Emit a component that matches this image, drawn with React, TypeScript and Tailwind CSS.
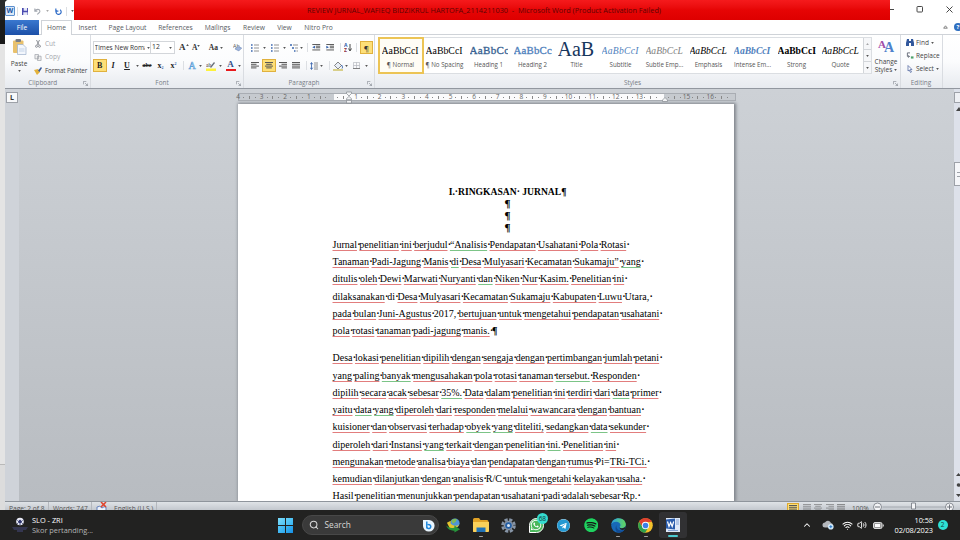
import React from 'react';
import { FaWhatsapp, FaTelegram, FaSpotify } from 'react-icons/fa';
import { Search, Wifi, Volume2, ChevronUp } from 'lucide-react';

type Line = { width: number; text: string };

// "~" marks a grammar (green) underline, "*" a word without any underline.
const FIRST_PARAGRAPH: Line[] = [
  { width: 296, text: 'Jurnal penelitian ini berjudul ~“Analisis Pendapatan Usahatani Pola Rotasi' },
  { width: 310.5, text: 'Tanaman Padi-Jagung Manis ~di Desa Mulyasari Kecamatan Sukamaju” ~yang' },
  { width: 294, text: 'ditulis oleh Dewi Marwati Nuryanti ~dan Niken Nur Kasim. Penelitian ini' },
  { width: 319, text: 'dilaksanakan *di Desa Mulyasari Kecamatan Sukamaju Kabupaten Luwu *Utara,' },
  { width: 329, text: 'pada bulan Juni-Agustus *2017, bertujuan untuk mengetahui pendapatan usahatani' },
  { width: 159.5, text: 'pola rotasi tanaman padi-jagung manis.' },
];

const SECOND_PARAGRAPH: Line[] = [
  { width: 329, text: 'Desa lokasi penelitian dipilih dengan sengaja dengan pertimbangan jumlah petani' },
  { width: 306.5, text: 'yang paling ~banyak mengusahakan pola rotasi tanaman ~tersebut. Responden' },
  { width: 328.5, text: 'dipilih secara acak sebesar ~35%. Data dalam penelitian ini terdiri dari ~data primer' },
  { width: 311, text: 'yaitu ~data ~yang diperoleh dari responden melalui wawancara dengan bantuan' },
  { width: 316, text: 'kuisioner dan observasi terhadap ~obyek ~yang diteliti, sedangkan ~data sekunder' },
  { width: 286, text: 'diperoleh dari Instansi ~yang terkait dengan penelitian ~ini. Penelitian ini' },
  { width: 316.5, text: 'mengunakan metode analisa biaya dan pendapatan dengan rumus *Pi= TRi-TCi.' },
  { width: 312, text: 'kemudian dilanjutkan dengan analisis *R/C untuk mengetahi kelayakan usaha.' },
  { width: 307, text: 'Hasil penelitian menunjukkan pendapatan usahatani padi adalah sebesar Rp.' },
];

const STYLES = [
  { name: '¶ Normal', sample: 'AaBbCcI', look: 'text-[9.8px] text-black' },
  { name: '¶ No Spacing', sample: 'AaBbCcI', look: 'text-[9.8px] text-black' },
  { name: 'Heading 1', sample: 'AaBbCc', look: 'text-[11px] text-[#365f91] [-webkit-text-stroke:0.3px_#365f91] tracking-[0.03em]' },
  { name: 'Heading 2', sample: 'AaBbCc', look: 'text-[10.8px] text-[#4f81bd] [-webkit-text-stroke:0.3px_#4f81bd] tracking-[0.02em]' },
  { name: 'Title', sample: 'AaB', look: 'text-[20px] text-[#17365d]' },
  { name: 'Subtitle', sample: 'AaBbCcI', look: 'text-[9.6px] italic text-[#4f81bd] tracking-[0.03em]' },
  { name: 'Subtle Emp...', sample: 'AaBbCcL', look: 'text-[9.6px] italic text-[#808080]' },
  { name: 'Emphasis', sample: 'AaBbCcL', look: 'text-[9.6px] italic text-black' },
  { name: 'Intense Em...', sample: 'AaBbCcI', look: 'text-[9.6px] font-bold italic text-[#4f81bd]' },
  { name: 'Strong', sample: 'AaBbCcI', look: 'text-[9.6px] font-bold text-black' },
  { name: 'Quote', sample: 'AaBbCcL', look: 'text-[9.6px] italic text-black' },
];

function TextLine({ width, text }: Line) {
  const words = text.split(' ');
  return (
    <div className="flex h-[17.25px] items-center justify-between whitespace-nowrap" style={{ width }}>
      {words.map((word, i) => {
        const plain = word.replace(/^[~*]/, '');
        const line = word.startsWith('*')
          ? ''
          : word.startsWith('~')
            ? 'underline decoration-[#7cc487]'
            : 'underline decoration-[#e27d7d]';
        return (
          <React.Fragment key={i}>
            <span className={`${line} decoration-1 underline-offset-2 [text-decoration-skip-ink:none]`}>{plain}</span>
            {!plain.endsWith('=') && <span className="w-[2px] text-center font-bold">·</span>}
          </React.Fragment>
        );
      })}
    </div>
  );
}

function Arrow({ className = '' }: { className?: string }) {
  return (
    <svg viewBox="0 0 4 3" className={`h-[2px] w-[3px] flex-none ${className}`}>
      <path d="M0 0h4L2 3z" fill="#555" />
    </svg>
  );
}

function Divider({ className = '' }: { className?: string }) {
  return <span className={`h-[9px] w-px flex-none bg-[#dcdfe3] ${className}`} />;
}

function Launcher() {
  return (
    <svg viewBox="0 0 6 6" className="absolute right-[2px] bottom-[2.5px] h-[5px] w-[5px]" fill="none" stroke="#858b93" strokeWidth=".8">
      <path d="M.5 4V.5H4M2.5 2.5l3 3M5.5 3v2.5H3" />
    </svg>
  );
}

function Group({ label, className, children }: { label: string; className: string; children: React.ReactNode }) {
  const hasLauncher = label !== 'Editing';
  return (
    <div className={`relative flex flex-none flex-col border-r border-[#d9dce1] ${className}`}>
      <div className="h-[43px]">{children}</div>
      <div className={`text-center text-[6.4px] leading-[9px] text-[#777c85] ${hasLauncher ? 'pr-[9px]' : ''}`}>{label}</div>
      {hasLauncher && <Launcher />}
    </div>
  );
}

function Lines({ kind, className = '' }: { kind: 'left' | 'center' | 'right' | 'full'; className?: string }) {
  const paths = {
    left: 'M0 .5h8M0 2.3h5.5M0 4.1h8M0 5.9h5.5',
    center: 'M0 .5h8M1.2 2.3h5.6M0 4.1h8M1.2 5.9h5.6',
    right: 'M0 .5h8M2.5 2.3H8M0 4.1h8M2.5 5.9H8',
    full: 'M0 .5h8M0 2.3h8M0 4.1h8M0 5.9h8',
  };
  return (
    <svg viewBox="0 0 8 6.4" className={`h-[6.4px] w-[8px] flex-none ${className}`}>
      <path d={paths[kind]} stroke="#555" strokeWidth="1" />
    </svg>
  );
}

function ListIcon({ stepped = false, className = '' }: { stepped?: boolean; className?: string }) {
  return (
    <svg viewBox="0 0 8 8" className={`h-[8px] w-[8px] flex-none ${className}`} fill="none">
      <path d={stepped ? 'M0 1h2M2 4h2M4 7h1.5' : 'M0 1h1.6M0 4h1.6M0 7h1.6'} stroke="#3b68b0" strokeWidth="1.5" />
      <path d={stepped ? 'M3 1h5M5 4h3M6.5 7H8' : 'M3 1h5M3 4h5M3 7h5'} stroke="#888" strokeWidth=".9" />
    </svg>
  );
}

function IndentIcon({ flip = false, className = '' }: { flip?: boolean; className?: string }) {
  return (
    <svg viewBox="0 0 9 8" className={`h-[7px] w-[8.5px] flex-none ${className}`} fill="none">
      <path d="M0 .6h9M4 2.5h5M4 4.3h5M0 6.8h9" stroke="#444" strokeWidth="1" />
      <path d={flip ? 'M0 2l3 1.6L0 5.2z' : 'M3 2L0 3.6l3 1.6z'} fill="#2d5ca8" />
    </svg>
  );
}

function TitleBar() {
  return (
    <div className="flex h-[20px] flex-none bg-white">
      <div className="flex w-[69px] items-center pt-[2px]">
        <div className="flex h-[10px] w-[10px] items-center justify-center rounded-[1px] border border-[#5c8fce] bg-[#dbe9f8] text-[7px] font-bold text-[#1c56a5]">W</div>
        <Divider className="ml-[2px]" />
        <svg viewBox="0 0 8 8" className="ml-[4px] h-[7px] w-[7px]">
          <path d="M0 0h8v8H0z" fill="#4b4bb0" />
          <path d="M2 0h4v3H2zM1.5 5h5v3h-5z" fill="#e5e8f6" />
        </svg>
        <svg viewBox="0 0 8 8" className="ml-[6px] h-[7px] w-[7px]" fill="none" stroke="#a3a8b0" strokeWidth="1.3">
          <path d="M1 .5v3h3M1 3.2C3 .8 7 1 7 3.6 7 5.500 5 6 4 7.500" />
        </svg>
        <Arrow className="ml-[5px] opacity-50" />
        <svg viewBox="0 0 8 8" className="ml-[6px] h-[7px] w-[7px]" fill="none" stroke="#2f6cc7" strokeWidth="1.4">
          <path d="M1 .5v3h3M2 2.500A3 3 0 1 0 6 2" />
        </svg>
        <Divider className="ml-[4px]" />
        <Arrow className="ml-[4px]" />
      </div>
      <div className="flex w-[816px] items-center justify-center bg-linear-to-b from-[#f51a1c] via-[#e60505] to-[#de0000] pt-[1px] pl-[4px] text-[7.300px] text-[#5a0505]">
        <span className="whitespace-nowrap">REVIEW JURNAL_WAFIEQ BIDZIKRUL HARTOFA_2114211030&nbsp; -&nbsp; Microsoft Word (Product Activation Failed)</span>
      </div>
      <svg viewBox="0 0 70 20" className="h-[20px] w-[70px]" fill="none" stroke="#333" strokeWidth=".9">
        <path d="M0 9.500h4M56.500 6.500l6 6M62.500 6.500l-6 6" />
        <rect x="27" y="6.500" width="5.500" height="5.500" rx=".8" />
      </svg>
    </div>
  );
}

function TabBar() {
  return (
    <div className="flex h-[15px] flex-none bg-white text-[6.7px] leading-[15px] text-[#555a61]">
      <div className="w-[34px] bg-linear-to-b from-[#3a78cf] to-[#1c50a8] text-center text-white">File</div>
      <div className="w-[2px] border-b border-[#cfd3d8]" />
      <div className="w-[31px] border-x border-t border-[#cfd3d8] text-center leading-[14px]">Home</div>
      <div className="flex flex-1 border-b border-[#cfd3d8]">
        <span className="w-[31px] text-center">Insert</span>
        <span className="w-[49px] text-center">Page Layout</span>
        <span className="w-[47px] text-center">References</span>
        <span className="w-[37px] text-center">Mailings</span>
        <span className="w-[36px] text-center">Review</span>
        <span className="w-[25px] text-center">View</span>
        <span className="w-[43px] text-center">Nitro Pro</span>
        <span className="flex-1" />
        <svg viewBox="0 0 6 5" className="mt-[5px] mr-[6px] h-[4px] w-[5px]" fill="none" stroke="#666">
          <path d="M.7 4h4.600L3 1z" />
        </svg>
        <span className="mt-[3px] -mr-[2px] h-[8px] w-[8px] rounded-full bg-[#2f6fc0] text-center text-[6px] leading-[8px] font-bold text-white">?</span>
      </div>
    </div>
  );
}

function Clipboard() {
  return (
    <Group label="Clipboard" className="w-[85.500px]">
      <div className="flex text-[6.5px] text-[#444]">
        <div className="flex w-[28px] flex-col items-center pt-[4px]">
          <svg viewBox="0 0 15 16" className="h-[16px] w-[15px]">
            <rect x="1" y="1.500" width="10.500" height="12.500" rx="1" fill="#e9c16c" />
            <rect x="3.500" y="0" width="5.500" height="3" rx="1" fill="#777d88" />
            <path d="M5.500 5.500H11l3 3V15.500H5.500z" fill="#f2f6fc" stroke="#9cb0cc" strokeWidth=".7" />
            <path d="M7 10h5.500M7 12h5.500" stroke="#b3c6df" strokeWidth=".7" />
          </svg>
          <span className="mt-[4px] leading-[9px]">Paste</span>
          <Arrow className="mt-[2px]" />
        </div>
        <div className="flex flex-col pt-[2px]">
          <div className="flex h-[13.500px] items-center gap-[4px] pl-[2px] text-[#a5a8ad]">
            <svg viewBox="0 0 6 8" className="h-[8px] w-[6px]" fill="none" stroke="#8c9096" strokeWidth="1">
              <path d="M1.500 0L4 5M4.500 0L2 5" />
              <circle cx="1.500" cy="6.300" r="1" />
              <circle cx="4.500" cy="6.300" r="1" />
            </svg>
            Cut
          </div>
          <div className="flex h-[13.500px] items-center gap-[3px] pl-[1px] text-[#a5a8ad]">
            <svg viewBox="0 0 8 8" className="h-[7px] w-[8px]" fill="#eee" stroke="#9b9fa6" strokeWidth=".8">
              <path d="M.5.500H4.500V5.500H.5zM3.500 2.500h4v5h-4z" />
            </svg>
            Copy
          </div>
          <div className="flex h-[13.500px] items-center gap-[3px] pl-[1px] text-[6.300px] tracking-[-0.02em] whitespace-nowrap">
            <svg viewBox="0 0 8 8" className="h-[8px] w-[8px]">
              <path d="M0 3l4-1 2 3-3 3z" fill="#e3b23c" />
              <path d="M4 3.500L7 0l1 1-2.500 4z" fill="#3f5f9c" />
            </svg>
            Format Painter
          </div>
        </div>
      </div>
    </Group>
  );
}

function FontGroup() {
  return (
    <Group label="Font" className="w-[153px]">
      <div className="mt-[6px] flex h-[13px] items-center pl-[2px] text-[#333]">
        <div className="flex h-[13px] w-[58.500px] flex-none items-center overflow-hidden border border-[#d3d6da] bg-white pl-[1px] text-[6.6px] whitespace-nowrap">
          <span className="w-[50px] flex-none overflow-hidden">Times New Roman</span>
          <Arrow className="ml-[2px]" />
        </div>
        <div className="-ml-px flex h-[13px] w-[25px] flex-none items-center justify-between border border-[#d3d6da] bg-white pr-[2px] pl-[1px] text-[6.8px]">
          12
          <Arrow />
        </div>
        <span className="ml-[4px] flex w-[9px] items-center text-[9px] leading-none font-bold [font-family:'Liberation_Serif',serif]">A<Arrow className="mb-[5px] rotate-180" /></span>
        <span className="ml-[4px] flex w-[9px] items-center text-[7.500px] leading-none font-bold [font-family:'Liberation_Serif',serif]">A<Arrow className="mb-[4px]" /></span>
        <span className="ml-[8px] w-[9px] text-[7.500px] leading-none font-bold [font-family:'Liberation_Serif',serif]">Aa</span>
        <Arrow className="ml-[2px]" />
        <svg viewBox="0 0 10 9" className="ml-[10px] h-[9px] w-[10px]">
          <text x="0" y="5.500" fontSize="5.500" fill="#555">Ab</text>
          <path d="M2 6l3-2.500 4 1.500-3 3z" fill="#9fb6dc" stroke="#5d78aa" strokeWidth=".5" />
        </svg>
      </div>
      <div className="mt-[5px] flex h-[13px] items-center pl-[2.500px] text-[8px] text-[#222] [font-family:'Liberation_Serif',serif]">
        <span className="h-[13px] w-[13.500px] border border-[#e0b13e] bg-[#fddf78] text-center leading-[11px] font-bold">B</span>
        <span className="w-[13px] text-center font-bold italic">I</span>
        <span className="ml-[1px] w-[13px] text-center font-bold underline">U</span>
        <Arrow className="ml-[2px]" />
        <span className="ml-[4px] w-[9px] text-[6px] font-bold line-through">abe</span>
        <span className="ml-[6px] flex w-[9px] items-end text-[8px] leading-[9px] font-bold">x<span className="text-[4px] leading-[4px] text-[#2d5ca8]">2</span></span>
        <span className="ml-[4px] flex w-[9px] items-start text-[8px] leading-[9px] font-bold">x<span className="text-[4px] leading-[5px] text-[#2d5ca8]">2</span></span>
        <Divider className="ml-[3px]" />
        <span className="ml-[4px] w-[9px] text-center text-[10px] leading-none text-[#eaf4ff] [-webkit-text-stroke:0.6px_#5a9fd8]">A</span>
        <Arrow className="ml-[2px]" />
        <svg viewBox="0 0 10 10" className="ml-[4px] h-[10px] w-[10px]">
          <text x="0" y="5.500" fontSize="5.500" fill="#333">ab</text>
          <path d="M4 6l4-5 1 1-4 5z" fill="#6a6f78" />
          <path d="M0 7.500h10V10H0z" fill="#fdf23c" />
        </svg>
        <Arrow className="ml-[3px]" />
        <span className="ml-[4px] h-[11px] w-[10px] border-b-[2.500px] border-[#e8191c] text-center text-[9px] leading-[8px] font-bold text-[#33508a]">A</span>
        <Arrow className="ml-[2px]" />
      </div>
    </Group>
  );
}

function Paragraph() {
  return (
    <Group label="Paragraph" className="w-[131px]">
      <div className="mt-[6px] flex h-[13px] items-center pl-[7.500px]">
        <ListIcon />
        <Arrow className="ml-[4px]" />
        <ListIcon className="ml-[5px]" />
        <Arrow className="ml-[4px]" />
        <ListIcon stepped className="ml-[4px]" />
        <Arrow className="ml-[2px]" />
        <Divider className="ml-[4px]" />
        <IndentIcon className="ml-[4px]" />
        <IndentIcon flip className="ml-[5px]" />
        <Divider className="ml-[6px]" />
        <svg viewBox="0 0 8 9" className="ml-[3px] h-[9px] w-[8px]">
          <text x="0" y="4.300" fontSize="5" fontWeight="bold" fill="#2d5ca8">A</text>
          <text x="0" y="9" fontSize="5" fontWeight="bold" fill="#8c2f3c">Z</text>
          <path d="M6 1v6M4.500 5.500L6 8l1.500-2.500" stroke="#333" strokeWidth=".9" fill="none" />
        </svg>
        <Divider className="ml-[4px]" />
        <span className="ml-[2.500px] h-[13px] w-[13.500px] flex-none border border-[#e0b13e] bg-[#fddf78] text-center text-[8px] leading-[11px] text-[#333]">¶</span>
      </div>
      <div className="mt-[5px] flex h-[13px] items-center pl-[7.500px]">
        <Lines kind="left" />
        <span className="ml-[3px] flex h-[13px] w-[13.500px] items-center justify-center border border-[#e0b13e] bg-[#fddf78]">
          <Lines kind="center" />
        </span>
        <Lines kind="right" className="ml-[3px]" />
        <Lines kind="full" className="ml-[5.500px]" />
        <Divider className="ml-[6px]" />
        <svg viewBox="0 0 8 8" className="ml-[3px] h-[8px] w-[8px]" fill="none">
          <path d="M1.500 1v6M.3 2.300L1.500.5l1.200 1.800M.3 5.700l1.200 1.800 1.200-1.800" stroke="#2d5ca8" strokeWidth=".8" />
          <path d="M4 1h4M4 3h4M4 5h4M4 7h4" stroke="#777" strokeWidth=".8" />
        </svg>
        <Arrow className="ml-[2px]" />
        <Divider className="ml-[6px]" />
        <svg viewBox="0 0 10 10" className="ml-[3px] h-[10px] w-[10px]">
          <path d="M1.500 4.500L5 1l3.500 3.500L5 8z" fill="#e8eef7" stroke="#555" strokeWidth=".7" />
          <path d="M8.500 4c1.500 2 1 3 .5 3.500" stroke="#2d5ca8" fill="none" />
          <path d="M0 8h10v2H0z" fill="#d8cf8a" />
        </svg>
        <Arrow className="ml-[2px]" />
        <svg viewBox="0 0 8 8" className="ml-[5px] h-[7px] w-[7px]" fill="none" stroke="#b4b8be" strokeWidth=".8">
          <path d="M.5.500h7v7h-7zM4 .5v7M.5 4h7" />
          <path d="M0 7.500h8" stroke="#555" />
        </svg>
        <Arrow className="ml-[5px]" />
      </div>
    </Group>
  );
}

function StylesGroup() {
  return (
    <Group label="Styles" className="w-[526px]">
      <div className="flex pt-[2px] pl-[3px]">
        <div className="flex h-[37px] flex-none border border-[#dbdee2] bg-white">
          {STYLES.map((style, i) => (
            <div
              key={style.name}
              className={`flex w-[44px] flex-none flex-col items-center ${i === 0 ? 'bg-[#fffdf5] outline-2 -outline-offset-1 outline-[#ecc455]' : ''}`}
            >
              <div className="flex h-[21px] w-[38px] items-end justify-start overflow-hidden">
                <span className={`[font-family:'Liberation_Serif',serif] leading-none whitespace-nowrap ${style.look} ${style.name === 'Title' ? '' : 'pb-[3px]'}`}>{style.sample}</span>
              </div>
              <span className="text-[6.2px] leading-[12px] whitespace-nowrap text-[#555]">{style.name}</span>
            </div>
          ))}
          <div className="flex w-[8px] flex-col divide-y divide-[#d3d6da] border-l border-[#d3d6da] bg-[#f6f7f9]">
            <span className="flex flex-1 items-center justify-center"><Arrow className="rotate-180 opacity-50" /></span>
            <span className="flex flex-1 items-center justify-center"><Arrow /></span>
            <span className="flex flex-1 items-center justify-center"><Arrow /></span>
          </div>
        </div>
        <div className="-mr-px flex flex-1 flex-col items-center pt-[2px] text-[6.500px] leading-[8px] text-[#444]">
          <span className="flex h-[17px] items-start font-bold [font-family:'Liberation_Serif',serif]">
            <span className="text-[11px] leading-[11px] text-[#a04ca8]">A</span>
            <span className="-ml-[2px] pt-[2px] text-[14px] leading-[14px] text-[#4d82cc]">A</span>
          </span>
          <span className="mt-[2px]">Change</span>
          <span className="flex items-center gap-[2px]">Styles<Arrow /></span>
        </div>
      </div>
    </Group>
  );
}

function Editing() {
  return (
    <Group label="Editing" className="w-[42px]">
      <div className="flex flex-col pt-[1px] pl-[5px] text-[6.500px] text-[#444]">
        <div className="flex h-[13px] items-center gap-[2.500px]">
          <svg viewBox="0 0 8 7" className="h-[7px] w-[8px]" fill="#31579c">
            <path d="M1 0h2v2h2V0h2l1 4v3H5V4H3v3H0V4z" />
          </svg>
          Find<Arrow />
        </div>
        <div className="flex h-[13px] items-center gap-[2.500px]">
          <svg viewBox="0 0 8 8" className="h-[7px] w-[8px]" fill="none">
            <path d="M4 1H1v4h2M2 4l1.500 1L2 6.500" stroke="#5d6470" />
            <path d="M5 5h3v2.500H5z" fill="#4da36a" />
          </svg>
          Replace
        </div>
        <div className="flex h-[13px] items-center gap-[2.500px]">
          <svg viewBox="0 0 8 8" className="h-[8px] w-[8px]" fill="#fff" stroke="#5b6fa5" strokeWidth=".8">
            <path d="M2 .5l4 4H4.200L5.500 7l-1 .5-1.300-2.500L2 6z" />
          </svg>
          Select<Arrow />
        </div>
      </div>
    </Group>
  );
}

function Ruler() {
  const numbers = ['4', '3', '2', '1', '', '1', '2', '3', '4', '5', '6', '7', '8', '9', '10', '11', '12', '13', '', '15', '16'];
  return (
    <div className="relative ml-[219px] h-[8px] w-[497.500px] flex-none border border-[#a9adb3] [background-image:linear-gradient(90deg,#c6cacf_95px,#fbfbfc_95px,#fbfbfc_425px,#c6cacf_425px)]">
      <div className="-ml-[6px] flex h-[6px] w-[503px] items-center overflow-hidden text-[6.500px] leading-[6px] text-[#666]">
        {numbers.map((n, i) => (
          <div key={i} className="flex w-[23.620px] flex-none items-center">
            <span className="w-[10px] text-center">{n}</span>
            <span className="flex flex-1 items-center justify-between pr-[1px]">
              <i className="size-px bg-[#888]" />
              <i className="h-[3px] w-px bg-[#888]" />
              <i className="size-px bg-[#888]" />
            </span>
          </div>
        ))}
      </div>
      <svg viewBox="0 0 6 12" className="absolute top-[-3px] left-[106.500px] h-[13px] w-[6px]" fill="#f2f3f5" stroke="#85898f" strokeWidth=".7">
        <path d="M.5.500h5V2L3 4.500.5 2zM3 4.800L5.500 7.300v1h-5v-1zM.5 8.800h5v2.700h-5z" />
      </svg>
      <svg viewBox="0 0 6 5" className="absolute top-[3px] left-[422.500px] h-[5px] w-[6px]" fill="#f2f3f5" stroke="#85898f" strokeWidth=".7">
        <path d="M3 .5l2.500 2.500v1.500h-5V3z" />
      </svg>
    </div>
  );
}

function DocumentArea() {
  return (
    <div className="flex h-[413px] flex-none border-t border-[#92979f] bg-linear-to-b from-[#cdd1d6] to-[#b8bcc1]">
      <div className="w-[14px] flex-none bg-[#cfd3d9] pt-[3px] pl-[1px]">
        <div className="h-[11px] w-[12px] border border-[#9da1a8] bg-[#f7f8fa] text-center text-[7px] leading-[9px] font-bold text-[#333]">L</div>
      </div>
      <div className="flex w-[935px] flex-none flex-col overflow-hidden pt-[4px]">
        <Ruler />
        <div className="mt-[3px] ml-[218.500px] h-[397px] w-[496.500px] flex-none overflow-hidden bg-white pt-[82px] pl-[95px] text-[10px] text-black shadow-[1px_0_3px_1px_#7f848b] [font-family:'Liberation_Serif',serif]">
          <div className="w-[350px] text-center text-[11px] leading-[11.900px] font-bold">
            <div className="text-[9.600px] whitespace-nowrap">I.·RINGKASAN· JURNAL¶</div>
            <div>¶</div>
            <div>¶</div>
            <div>¶</div>
          </div>
          <div className="mt-[2px]">
            {FIRST_PARAGRAPH.slice(0, 5).map((line) => (
              <TextLine key={line.text} {...line} />
            ))}
            <div className="flex h-[17.250px] items-center">
              <TextLine {...FIRST_PARAGRAPH[5]} />
              <span className="font-bold">¶</span>
            </div>
          </div>
          <div className="mt-[10px]">
            {SECOND_PARAGRAPH.map((line) => (
              <TextLine key={line.text} {...line} />
            ))}
          </div>
        </div>
      </div>
      <div className="flex flex-1 flex-col bg-[#dde1ea] pt-[3px]">
        <div className="h-[11px] border border-[#9da1a8] bg-[#eef0f4]" />
        <svg viewBox="0 0 6 4" className="mt-[4px] ml-[2px] h-[4px] w-[6px]"><path d="M0 4l3-4 3 4z" fill="#444" /></svg>
        <div className="mt-[51px] flex h-[24px] flex-none items-center border border-r-0 border-[#9da1a8] bg-[#f5f6f9] pl-[2px]">
          <span className="h-[5px] w-[4px] border-y border-[#9da1a8]" />
        </div>
        <div className="flex-1" />
        <svg viewBox="0 0 5 24" className="mb-[4px] ml-[2px] h-[24px] w-[5px]" fill="#444">
          <path d="M0 3l2.500-3L5 3zM0 21h5l-2.500 3z" />
          <circle cx="2.500" cy="12" r="1.800" />
        </svg>
      </div>
    </div>
  );
}

function StatusBar() {
  return (
    <div className="flex h-[9px] flex-none overflow-hidden border-t border-[#8f959c] bg-linear-to-b from-[#dfe3e7] to-[#c3c8ce] text-[6.600px] leading-[13px] whitespace-nowrap text-[#555]">
      <span className="w-[44px] border-r border-[#b4b8be] pl-[4px]">Page: 2 of 8</span>
      <span className="w-[43px] border-r border-[#b4b8be] pl-[4px]">Words: 747</span>
      <span className="flex w-[17px] pl-[4px]">
        <svg viewBox="0 0 11 9" className="h-[9px] w-[11px]" fill="none">
          <path d="M1 5q3-2 5 1 2-2 4-1v4H1z" fill="#eef2fa" stroke="#6381bd" />
          <path d="M5 0l5 5M10 0L5 5" stroke="#e0432c" strokeWidth="1.500" />
        </svg>
      </span>
      <span className="w-[48px] border-r border-[#b4b8be] pl-[5px]">English (U.S.)</span>
      <span className="flex-1" />
      <span className="flex items-start gap-[3.500px] pt-[2px]">
        <span className="-mt-[1px] box-content h-[8px] border border-[#dda92f] bg-[#fddf78] p-[1px]"><Lines kind="full" /></span>
        <Lines kind="full" className="opacity-50" />
        <Lines kind="center" className="opacity-50" />
        <Lines kind="right" className="opacity-50" />
        <Lines kind="full" className="opacity-60" />
      </span>
      <span className="ml-[7px] w-[19px]">100%</span>
      <svg viewBox="0 0 86 9" className="h-[9px] w-[89px] flex-none" fill="none" stroke="#70757d">
        <path d="M10 5h67" stroke="#9a9fa6" strokeWidth=".8" />
        <circle cx="5" cy="5" r="4" fill="#f4f5f7" strokeWidth=".8" />
        <circle cx="77" cy="5" r="4" fill="#f4f5f7" strokeWidth=".8" />
        <path d="M2.500 5h5M74.500 5h5M77 2.500v5" />
        <path d="M39 1h4v6h-4z" fill="#f4f5f7" strokeWidth=".8" />
      </svg>
    </div>
  );
}

function AppSlot({ running = false, active = false, children }: { running?: boolean; active?: boolean; children: React.ReactNode }) {
  return (
    <div className={`relative flex h-[26px] w-[27.400px] flex-none items-center justify-center rounded-[3px] ${active ? 'bg-[#313133]' : ''}`}>
      {children}
      {running && <span className="absolute bottom-[1px] h-[1.500px] w-[4px] rounded-full bg-[#a0a0a0]" />}
      {active && <span className="absolute bottom-[1px] h-[2px] w-[10px] rounded-full bg-[#4ccbd0]" />}
    </div>
  );
}

function Taskbar() {
  return (
    <div className="flex h-[30px] flex-none items-center bg-[#222221] text-white">
      <div className="flex w-[278px] flex-none items-center pl-[12px]">
        <svg viewBox="0 0 16 16" className="h-[16px] w-[16px]">
          <path d="M0 10h16l-2 3H2zM5 13h6v2H5z" fill="#343650" />
          <circle cx="8" cy="4.500" r="3.800" fill="#e8eaf4" />
          <path d="M8 3l1.500 1.200L9 6H7l-.5-1.800zM4.500 2.500l1 1M11.500 2.500l-1 1M8 8V7M5 7l.7-.7M11 7l-.7-.7" fill="#30366e" stroke="#30366e" />
        </svg>
        <div className="ml-[4px] text-[7.400px] leading-[10px] whitespace-nowrap">
          <div>SLO - ZRI</div>
          <div className="text-[#b5b5b5]">Skor pertanding...</div>
        </div>
      </div>
      <div className="grid h-[15px] w-[15px] flex-none grid-cols-2 gap-px">
        <span className="bg-linear-to-br from-[#7bdcfb] to-[#4cc2f5]" />
        <span className="bg-linear-to-br from-[#64d2fa] to-[#36b4f2]" />
        <span className="bg-linear-to-br from-[#55c8f8] to-[#2ba8ee]" />
        <span className="bg-linear-to-br from-[#3cb9f3] to-[#168fe6]" />
      </div>
      <div className="ml-[8.500px] flex h-[20px] w-[137px] flex-none items-center rounded-full border border-[#484848] bg-[#3a3a3a] pr-[3px] pl-[6px] text-[8.300px] text-[#d8d8d8]">
        <Search className="h-[10px] w-[10px]" strokeWidth={2.500} />
        <span className="ml-[6px] flex-1">Search</span>
        <svg viewBox="0 0 13 13" className="h-[13px] w-[13px]">
          <path d="M1 1h6a5.800 5.800 0 1 1-6 6z" fill="#e9f5fd" />
          <path d="M4.800 2.500v7M4.800 8a2 2 0 1 0 1-2.200" fill="none" stroke="#1d86dc" strokeWidth="1.500" />
        </svg>
      </div>
      <div className="ml-[1.800px] flex">
        <AppSlot>
          <svg viewBox="0 0 16 16" className="h-[15px] w-[15px]">
            <circle cx="9.500" cy="5.500" r="5" fill="#4d94d8" />
            <path d="M5.500 3q2-3 6-2l-1 3-3 2z" fill="#7fba58" />
            <path d="M1 5l4-2v3q4 4 9 1-3 6-10 4z" fill="#e3c52d" />
            <path d="M0 8q5 4 9 2v-2l6 4-6 3.500v-2Q3 14 0 8z" fill="#27943b" />
          </svg>
        </AppSlot>
        <AppSlot running>
          <svg viewBox="0 0 16 14" className="h-[14px] w-[16px]">
            <path d="M0 1.500Q0 0 1.500 0H6l1.500 2H14q1.500 0 1.500 1.500V14H0z" fill="#e2a326" />
            <path d="M0 4h16v8.500Q16 14 14.500 14h-13Q0 14 0 12.500z" fill="#fbd15a" />
            <path d="M3.500 9.500h9V14h-9z" fill="#2173b8" />
          </svg>
        </AppSlot>
        <AppSlot>
          <svg viewBox="0 0 16 16" className="h-[15px] w-[15px]">
            <circle cx="8" cy="8" r="6.300" fill="none" stroke="#8795a6" strokeWidth="3" strokeDasharray="3.300 1.650" />
            <circle cx="8" cy="8" r="5" fill="#8795a6" />
            <circle cx="8" cy="8" r="3.500" fill="#245fa5" />
            <circle cx="8" cy="8" r="1.600" fill="#dce8f5" />
          </svg>
        </AppSlot>
        <AppSlot>
          <span className="flex h-[15px] w-[15px] items-center justify-center rounded-full rounded-bl-[3px] border border-white bg-[#4ab75a]">
            <FaWhatsapp className="h-[12px] w-[12px]" />
          </span>
          <span className="absolute top-[1px] right-[2px] h-[11px] w-[11px] rounded-full bg-[#35dcd0] text-center text-[6.500px] leading-[11px] text-[#123b3a]">68</span>
        </AppSlot>
        <AppSlot>
          <span className="rounded-full bg-white"><FaTelegram className="h-[13px] w-[13px] text-[#2499d2]" /></span>
        </AppSlot>
        <AppSlot>
          <span className="rounded-full bg-[#151515]"><FaSpotify className="h-[14.500px] w-[14.500px] text-[#1fd15f]" /></span>
        </AppSlot>
        <AppSlot running>
          <svg viewBox="0 0 16 16" className="h-[15px] w-[15px]">
            <defs>
              <linearGradient id="edgeTop" x1="0" x2="1">
                <stop offset="0" stopColor="#2ba3e0" />
                <stop offset="1" stopColor="#62d45c" />
              </linearGradient>
            </defs>
            <circle cx="8" cy="8" r="7.800" fill="#1769b8" />
            <path d="M.3 7C1 2.500 4.500.2 8 .2c4.500 0 7.800 3 7.800 6.800 0 2.500-2 3.800-4 3.800-1.500 0-2.500-.5-2.500-1.300 0-.6.8-.9.8-2.100C10.100 5.800 8 4 5.500 4 3 4 1 5.200.3 7z" fill="url(#edgeTop)" />
            <path d="M6 7.500c-1 3 1.500 6 5 5.800 1.800 0 3-1 3.700-1.500-1.500 3-4.500 4.200-7 4C4.500 15 4 10 6 7.500z" fill="#124c94" />
            <path d="M9.300 9.500c0 .8 1 1.300 2.500 1.300 1.500 0 3-.7 3.700-2-.2 2-.5 2.500-.8 3-2 1.700-6 1-5.400-2.300z" fill="#222221" />
          </svg>
        </AppSlot>
        <AppSlot running>
          <svg viewBox="0 0 16 16" className="h-[15px] w-[15px]">
            <circle cx="8" cy="8" r="7.800" fill="#f4c22b" />
            <path d="M1.200 4.100A7.800 7.800 0 0 1 14.800 4.100L8 4.400 5 10z" fill="#e0412f" />
            <path d="M1.200 4.100A7.800 7.800 0 0 0 7.600 15.800L11 10 5 10z" fill="#2ea04d" />
            <circle cx="8" cy="8" r="3.900" fill="#fff" />
            <circle cx="8" cy="8" r="3" fill="#3d7fe6" />
          </svg>
        </AppSlot>
        <AppSlot active>
          <svg viewBox="0 0 15 14" className="h-[14px] w-[15px]">
            <path d="M0 0h14v14H0z" fill="#dfe9f7" />
            <path d="M0 1.500L9 .5v11L0 10.500z" fill="#2a5cab" />
            <path d="M1.500 3.500l1.500 5 1.600-4 1.600 4 1.500-5" fill="none" stroke="#fff" strokeWidth="1.200" />
            <path d="M10 2h3M10 4h3M10 6h3M2 12.500h10" stroke="#6e93cb" strokeWidth=".8" />
          </svg>
        </AppSlot>
      </div>
      <div className="flex flex-1 items-center justify-end pr-[12.500px]">
        <ChevronUp className="h-[10px] w-[10px]" strokeWidth={2.500} />
        <svg viewBox="0 0 12 10" className="ml-[10px] h-[10px] w-[12px]">
          <path d="M3 7.500a2.500 2.500 0 0 1 0-5 3.300 3.300 0 0 1 6 .5 2.300 2.300 0 0 1 0 4.500z" fill="#b5b8bc" />
          <circle cx="8.800" cy="6.700" r="2.800" fill="#d6ecfb" />
          <path d="M7.300 6.700h3M8.800 5.200v3" stroke="#2878c8" />
        </svg>
        <Wifi className="ml-[8px] h-[11px] w-[11px]" strokeWidth={2.200} />
        <Volume2 className="ml-[4px] h-[10px] w-[10px]" strokeWidth={2.200} />
        <svg viewBox="0 0 11 7" className="ml-[6px] h-[7px] w-[11px]">
          <rect x=".5" y=".5" width="8.500" height="6" rx="1.500" fill="#999" stroke="#ddd" />
          <path d="M2 2h5v3H2z" fill="#fff" />
          <path d="M10.300 2.500v2" stroke="#ddd" />
        </svg>
        <div className="ml-[9px] w-[40px] text-right text-[7.400px] leading-[10px] tracking-[-0.01em] whitespace-nowrap">
          <div>10:58</div>
          <div>02/08/2023</div>
        </div>
        <span className="ml-[4.500px] h-[10px] w-[10px] rounded-full bg-[#2ee0d3] text-center text-[6.500px] leading-[10px] text-[#123b3a]">2</span>
      </div>
    </div>
  );
}

export default function App() {
  return (
    <div className="flex h-[540px] w-[960px] flex-col overflow-hidden bg-[#222221] [font-family:'Open_Sans','Noto_Sans',sans-serif]">
      <div className="flex h-[510px] flex-none">
        <div className="flex w-[5px] flex-none flex-col">
          <div className="h-[20px] bg-[#2b2b2b]" />
          <div className="h-[24px] bg-[#1a1a1a]" />
          <div className="h-[421px] border-b border-[#b9b9b9] bg-[#e4e4e4]" />
          <div className="flex-1 bg-[#dcdcdc]" />
        </div>
        <div className="flex w-[955px] flex-none flex-col overflow-hidden rounded-tl-[4px] bg-white">
          <TitleBar />
          <TabBar />
          <div className="flex h-[53px] flex-none bg-linear-to-b from-white via-[#fbfcfd] to-[#e7eaef]">
            <Clipboard />
            <FontGroup />
            <Paragraph />
            <StylesGroup />
            <Editing />
          </div>
          <DocumentArea />
          <StatusBar />
        </div>
      </div>
      <Taskbar />
    </div>
  );
}
